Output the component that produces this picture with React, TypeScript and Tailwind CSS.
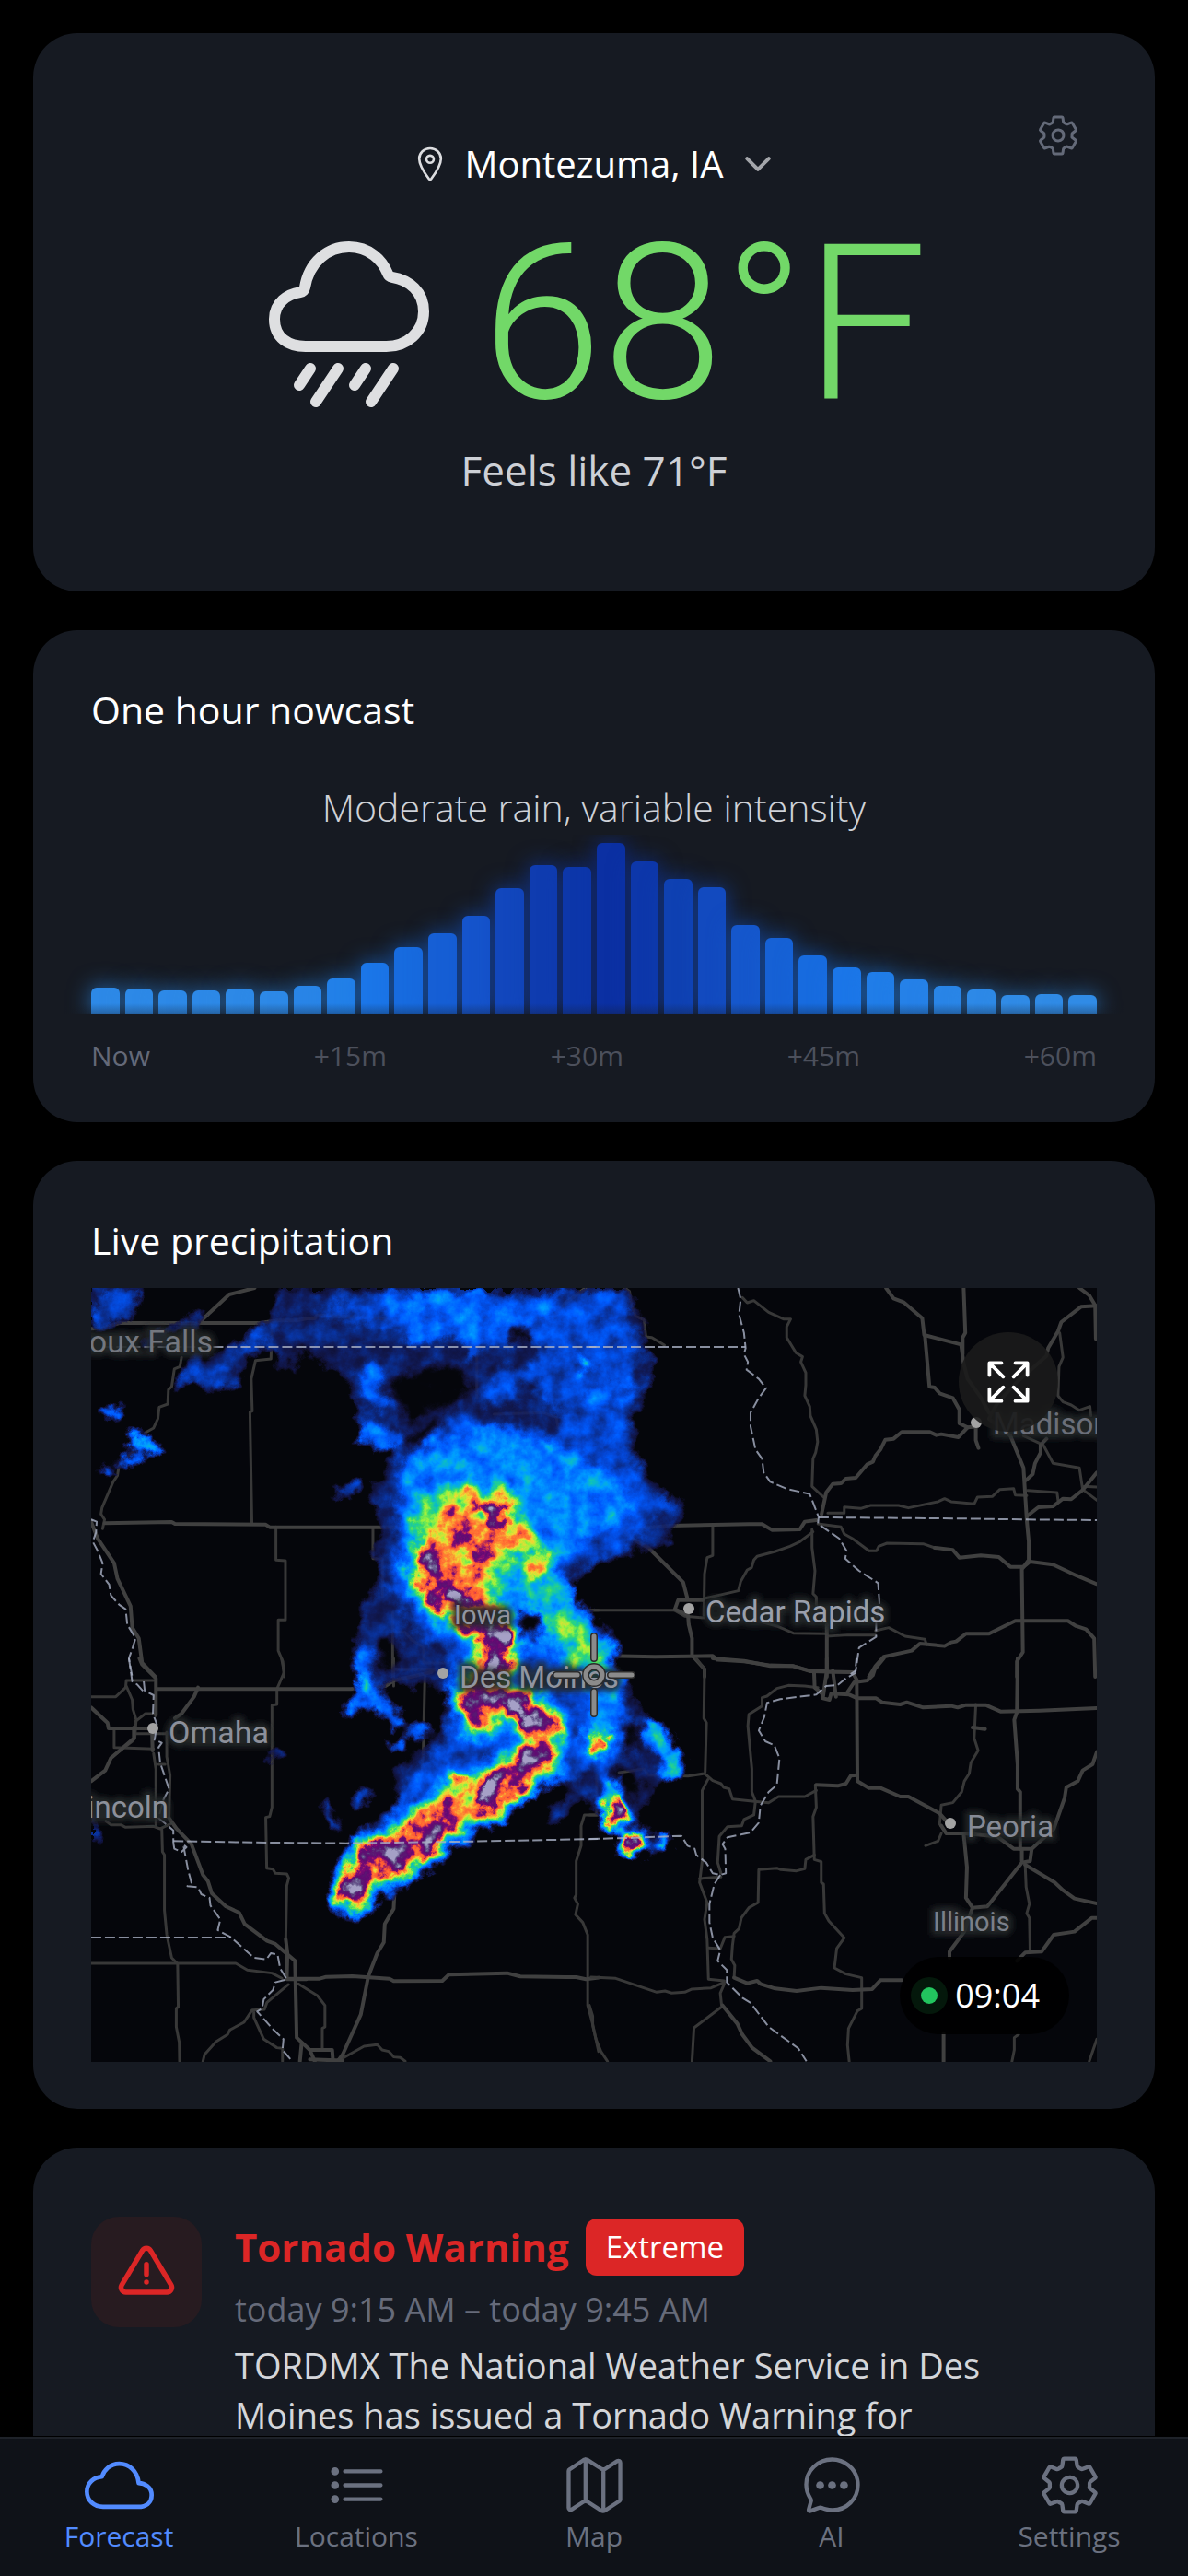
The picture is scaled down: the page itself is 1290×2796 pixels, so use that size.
import type { ReactNode } from 'react';
import {
  IoChatbubbleEllipsesOutline,
  IoChevronDown,
  IoCloudOutline,
  IoExpandOutline,
  IoListOutline,
  IoLocationOutline,
  IoMapOutline,
  IoRainyOutline,
  IoSettingsOutline,
} from 'react-icons/io5';
import { TbAlertTriangle } from 'react-icons/tb';

const bars = [
  { h: 29, c: '#2d89e7' }, { h: 28, c: '#2d89e7' }, { h: 26, c: '#2d89e7' }, { h: 26, c: '#2d89e7' },
  { h: 28, c: '#2d89e7' }, { h: 25, c: '#2d89e7' }, { h: 31, c: '#2985e7' }, { h: 39, c: '#2280e8' },
  { h: 56, c: '#1b76e8' }, { h: 73, c: '#176bdf' }, { h: 88, c: '#165fd5' }, { h: 107, c: '#1554cc' },
  { h: 137, c: '#1247bd' }, { h: 162, c: '#0f3cb0' }, { h: 160, c: '#0d37aa' }, { h: 186, c: '#0b30a3' },
  { h: 166, c: '#0d37aa' }, { h: 147, c: '#0f41b2' }, { h: 138, c: '#124abf' }, { h: 97, c: '#1557cc' },
  { h: 83, c: '#1661d5' }, { h: 64, c: '#176bdf' }, { h: 51, c: '#1b76e8' }, { h: 46, c: '#207de8' },
  { h: 38, c: '#2581e8' }, { h: 31, c: '#2985e7' }, { h: 27, c: '#2d89e7' }, { h: 21, c: '#308be6' },
  { h: 22, c: '#308be6' }, { h: 21, c: '#308be6' },
];

const tabs = [
  { name: 'Forecast', icon: IoCloudOutline },
  { name: 'Locations', icon: IoListOutline },
  { name: 'Map', icon: IoMapOutline },
  { name: 'AI', icon: IoChatbubbleEllipsesOutline },
  { name: 'Settings', icon: IoSettingsOutline },
];

// The base map comes in four quadrants, each with its own local units.
const tiles = [
  {
    transform: 'translate(-9 -18) scale(0.3571 0.3333)',
    thin: [
      'M300,280 295,310 278,318 270,375 260,385 258,432 232,442 228,480 215,510 190,525 150,590 110,632 105,665 92,685 58,770 55,790 66,808 60,838',
      'M575,160 572,285 525,290 512,350 515,455 508,458 514,822',
      'M587,832 587,940 616,942 616,1135 594,1135 594,1235 608,1270 612,1320',
      'M788,54 788,100 780,140',
      'M882,835 882,935 911,936 911,1060',
      'M1198,250 1198,410 M1250,465 1400,460 1440,475 1445,510 1510,555 1510,680',
      'M942,1110 942,1320 M942,1175 980,1175 1000,1200 1036,1225 1036,1275 1110,1275 M942,1296 1080,1296',
      'M1530,1103 1568,1103',
    ],
    thick: [
      'M25,187 60,185 110,168 540,168 590,160 650,160 680,153 705,153 712,143 900,152 960,162 1130,155 1180,140 1250,155 1320,155 1340,147 1430,150 1470,100 1530,54',
      'M355,165 445,75 522,54',
      'M66,820 270,816 280,822 555,824 568,833 990,833',
      'M25,815 45,870 95,950 105,1000 145,1090 150,1160 170,1195 180,1275 220,1320',
    ],
    border: [
      'M60,246 1568,246',
      'M25,808 42,815 40,850 30,880 45,910 60,950 55,985 80,1020 85,1055 110,1085 130,1100 135,1150 160,1195 150,1230 140,1260 150,1320',
    ],
  },
  {
    transform: 'translate(541 -18) scale(0.3571 0.3333)',
    thin: [
      'M108,54 122,65 128,110 140,145 166,158 172,213 190,215 228,240',
      'M465,85 480,102 500,95 545,133 590,155 612,155 600,180 600,215 628,265 648,278 643,295 658,330 658,370 655,405 670,440 672,470 690,515 694,555 688,590 680,610 677,700 712,735',
      'M725,787 775,787 775,767 825,772 855,762 940,762 970,770 1060,750 1080,740 1100,750 1170,757 1180,735 1225,733 1248,710 1290,707 1295,728 1330,730',
      'M695,822 765,832 775,855 800,870 850,910 873,910 880,895 905,885 1015,887 1050,900',
      'M375,825 375,925 358,932 350,985 348,1120',
      'M350,1065 453,1040 460,1010 480,972 493,965 500,940 510,928 565,912 610,895 640,880 680,848',
      'M677,840 677,900 686,975 680,1050 690,1060 690,1090',
      'M258,1103 290,1123 348,1128 M520,1140 570,1155 620,1178 720,1180 M722,1188 785,1184 870,1184 M870,1170 910,1160 960,1188 1020,1198 1025,1215',
      'M1430,200 1440,280 1428,310 1425,405 1440,425 1465,435 1490,452 1522,440 1525,470',
      'M1320,535 1380,565 1410,625 1490,640 1500,710 1543,745 M1333,713 1422,720 1425,745 M1500,700 1543,702',
      'M0,1103 258,1103',
    ],
    thick: [
      'M902,54 925,88 955,100 1012,152 1018,207 1130,238 1138,300 1150,350 1190,410 1215,460',
      'M1138,54 1138,54 1143,200 1135,215 1135,270',
      'M1020,207 1034,375 1050,378 1065,397 1105,412 1125,450 1125,495 1150,508 1180,505 M1175,505 1175,550 1183,575',
      'M1150,508 1122,540 1070,530 1055,533 1035,523 950,523 925,545 900,548 885,580 870,600 862,620 845,628 810,672 780,675 765,690 740,692 720,720 706,790',
      'M1543,112 1495,115 1435,165 1425,195 1395,250 1390,275 1300,360 1240,430 1215,480 1280,535 1320,640 1330,810 1336,880 1336,940 1315,970 1318,1240 1300,1270 1300,1320',
      'M1390,545 1372,565 1372,590 1355,625 1348,660 1328,680 M1333,795 1365,768 1410,765 1440,740 1465,742 1500,712 1543,655',
      'M1490,54 1520,78 1538,110 1540,220',
      'M60,835 140,838 245,828 485,823 525,823 555,842 640,840 655,815 690,810',
      'M100,840 130,870 180,900 285,1012 298,1065 M345,1070 270,1070 260,1100 300,1120 302,1150 312,1195 312,1250 350,1295 350,1320',
      'M1050,900 1105,907 1125,932 1190,925 1245,930 1280,962 1320,962 1340,945 1410,955 1480,990 1543,1018',
      'M60,1252 200,1255 375,1252 390,1265 470,1270 550,1283 620,1285 670,1302 800,1305',
      'M722,1150 722,1320 M850,1320 870,1285 895,1255 980,1235 1005,1212 1080,1220 1100,1208 1115,1205 1145,1180 1215,1180 1295,1138 1455,1138 1480,1155 1510,1165 1535,1195 1538,1320',
    ],
    border: [
      'M0,246 475,246',
      'M452,54 460,90 455,140 470,200 475,250 470,270 482,295 478,320 515,350 537,380 515,412 490,460 490,505 505,580 525,610 530,655 550,685 600,708 670,725 697,800 695,822 760,870 782,910 778,935 820,975 878,1015 882,1080 872,1140 872,1190 820,1225 810,1300 785,1318',
      'M697,801 1140,805 1320,808 1543,810',
    ],
  },
  {
    transform: 'translate(-9 402) scale(0.3571 0.3333)',
    thin: [
      'M25,125 100,125 130,95 132,72 215,72 M132,90 150,135 152,165 162,200 158,260 150,270 90,320',
      'M95,230 95,290 M98,290 215,295 M158,245 255,245',
      'M160,205 190,180 215,180 M604,0 612,45 590,100 590,150 575,152 575,485 568,515 556,518 559,683 578,686 585,700 620,702 626,715 620,740 617,915',
      'M215,310 222,360 222,545 M255,240 255,320 265,380 262,520 M250,345 230,345',
      'M70,530 85,542 115,542 130,550 215,547 235,555 265,540 M240,555 242,630 248,640 248,820 255,900 270,975 288,995 290,1135 284,1140 284,1200 293,1250 294,1312',
      'M25,993 465,993 500,1015 575,1025 605,1042',
      'M625,1062 560,1120 552,1143 515,1145 490,1185 447,1210 440,1225 405,1248 370,1290 365,1312 M520,1145 520,1170 550,1240 590,1268 607,1270 607,1312',
      'M655,1060 713,1098 736,1130 736,1200 728,1205 728,1275',
      'M945,0 945,90 M942,35 1080,35 1040,50 M1040,50 1035,300 1030,370',
      'M1568,510 1525,510 1515,545 1515,610 1500,660 1500,770 1495,780 1505,800 1498,835 1520,860 1535,900 1535,1130 1550,1190 1568,1280',
      'M785,1305 855,1263 895,1258 910,1275 930,1280 945,1298 965,1300 980,1312',
    ],
    thick: [
      'M172,0 180,20 222,65 222,185 M222,100 815,100 920,90 945,72 1060,45',
      'M350,95 338,125 300,180 280,195 M25,160 75,210 78,228 210,228 212,300 M155,225 155,260 85,325 68,365 25,400',
      'M262,520 285,555 330,605 365,705 380,725 392,765 435,808 475,828 492,865 560,920 585,930 645,985 650,1235 690,1275 705,1312',
      'M617,915 622,960 620,1045 680,1045 M620,1043 720,1043 740,1037 820,1035 932,1043 945,1051 1093,1050 1113,1030 1290,1025 1330,1036 1470,1038 1500,1038 1530,1045 1568,1040',
      'M947,770 945,815 918,865 915,925 895,960 868,1035 845,1160 790,1290 775,1312',
      'M665,1255 660,1312 M690,1275 758,1275 760,1305 M690,1306 790,1310',
    ],
    border: [
      'M140,0 150,75 165,85 190,115 M185,75 188,105 215,120 213,180 225,215 218,265 240,275 230,290 235,340 262,425 245,460 230,520 275,560 275,600',
      'M275,595 560,600 800,602 1140,597 1568,588',
      'M275,600 278,620 300,630 315,615 305,605 320,690 330,730 318,742 350,745 360,768 385,780 388,805 418,850 410,885 450,908 520,975 558,980 572,960 592,965 600,1010 620,1045 585,1055 578,1080 550,1110 545,1140 530,1150 580,1210 610,1240 607,1275 635,1310',
      'M25,909 450,909',
    ],
  },
  {
    transform: 'translate(541 402) scale(0.3571 0.3333)',
    thin: [
      'M325,0 350,35 348,195 356,210 352,370 M360,395 343,430 343,660 335,730 358,795 350,850 358,915 362,1045 410,1050',
      'M695,95 655,90 605,88 570,98 540,123 525,128 525,155 485,182 482,220 494,360 494,435 505,465 500,510 470,525 463,545 420,548 395,580 390,665 400,700',
      'M90,372 165,360 180,380 300,383 350,375 375,398 400,408 408,420 425,425 435,458 495,465 545,470 575,450 655,450 690,430',
      'M687,412 690,485 680,515 684,655 705,662 705,730 712,735 715,830 728,855 775,910 752,945 745,1008 780,1028 828,1040 828,1140 815,1148 788,1205 785,1260 790,1312',
      'M684,640 658,655 655,685 630,692 582,688 570,683 515,688 513,795 485,812 462,845 455,880 440,895 435,935 432,980 442,1000 440,1040',
      'M335,717 400,712 M362,943 398,945 412,908 440,905',
      'M1175,150 1170,260 1182,300 1160,340 1155,375 1140,400 1132,435 1105,470 1070,478 1065,540 1085,570 M1070,570 1060,595 1022,610',
      'M1325,670 1328,745 1338,800 1330,830 1338,845 1340,955',
      'M22,380 22,510 0,510 M5,1038 80,1042 205,1087 230,1083 250,1090 290,1087 312,1077 370,1073 410,1055',
      'M410,1060 398,1090 402,1130 M402,1135 318,1203 312,1312 M0,1130 10,1165 10,1195 20,1240 35,1280 55,1312',
      'M1543,1240 1520,1312 M1305,1225 1292,1235 1292,1275 1285,1312',
    ],
    thick: [
      'M375,0 470,8 550,25 620,25 670,40 800,45 M722,0 722,40 710,130 730,135 735,115 790,118 815,130 872,130 890,143 945,150 965,143 1015,160 1100,155 1120,160 1145,152 1205,152 1250,173 1370,170 1543,162',
      'M683,40 685,95 708,115 M740,40 750,125 M895,0 868,35 862,55 845,72 805,78 785,110 M800,45 813,70 815,400 850,422 885,422 945,450 970,450 1065,505 1090,535',
      'M815,380 795,382 780,408 755,415 690,412',
      'M1302,0 1300,175 1292,200 1302,345 1302,425 1310,435 1310,620 M1543,305 1530,345 1500,365 1485,400 1450,420 1445,455 1412,555 1345,620 1340,660 1315,665 1210,808 1165,812 1145,780 1148,680 1138,570 1085,570 1070,545',
      'M1165,225 1203,230 M1140,570 1240,580 1290,620 1345,620 M1315,620 1315,660 M1325,672 1415,730 1440,755 1475,782 1543,798',
      'M1543,845 1528,845 1475,890 1412,900 1375,955 1325,958 1300,985 M1165,812 1140,890 1095,955 1095,975',
      'M440,1040 480,1058 510,1050 520,1060 565,1075 630,1083 705,1073 800,1080 860,1077 885,1048 950,1048 M405,1130 450,1190 465,1225 495,1268 550,1312',
      'M1077,1220 1077,1312',
    ],
    border: [
      'M0,588 120,585 280,578 298,610 320,620 325,640 355,665 375,700 398,705 415,700 413,620 405,605 420,583 490,567 515,535 520,480 545,435 570,412 578,325 562,283 535,270 515,235 532,190 540,145 580,133 690,118 720,90 755,87 780,65 808,48 812,0',
      'M398,705 380,735 365,800 365,860 375,910 398,950 390,985 418,1015 418,1055 465,1105 490,1122 545,1200 635,1270 660,1312',
    ],
  },
];

// Rain rate as grey levels; the radar filter turns them into the colour scale.
const radar = {
  faint:
    'M190,30 200,0 582,0 600,30 604,60 615,82 608,110 590,140 597,185 612,205 628,225 648,232 645,248 630,262 626,280 585,290 545,304 522,320 540,350 568,372 572,400 588,435 602,462 628,482 642,505 646,528 612,537 606,560 590,575 604,588 632,596 630,610 590,616 572,600 556,570 530,555 512,580 490,590 496,562 526,540 480,545 440,580 380,620 330,655 272,688 264,678 270,612 290,590 305,575 330,560 326,520 360,500 378,480 385,440 330,430 300,460 284,466 296,430 282,400 288,350 305,325 310,270 302,220 322,192 328,178 290,165 282,120 270,80 225,70 218,98 200,80 185,60 160,110 125,115 92,100 100,80 160,60Z',
  holes: [
    'M332,92 400,85 415,110 390,128 345,145 326,120Z',
    'M470,352 492,345 488,370 468,385 458,370Z',
    'M455,48 478,45 475,62 460,62Z',
    'M577,470 600,478 598,500 582,505Z',
    'M565,520 600,530 600,555 580,550Z',
    'M312,385 328,375 335,405 318,415Z',
    'M345,160 378,140 370,160 342,178Z',
  ],
  blue:
    'M245,20 330,2 580,4 592,60 600,90 580,130 585,170 600,210 640,240 612,250 590,280 550,295 520,300 515,330 545,370 570,400 578,440 590,470 575,510 560,540 580,600 555,560 545,520 500,540 420,590 340,640 280,675 270,620 320,580 340,540 390,480 395,430 390,400 350,370 322,320 330,260 332,190 380,150 425,120 440,90 425,50 330,48 250,30Z',
  bright:
    'M340,190 380,165 440,150 520,175 560,200 590,235 560,265 525,280 500,300 520,350 556,380 572,420 576,455 560,490 545,470 530,420 500,400 470,360 430,370 400,390 370,370 345,320 338,260Z',
  green:
    'M350,250 360,222 402,210 454,212 468,245 500,290 508,315 475,312 452,302 447,335 420,352 372,355 350,330Z M490,350 530,360 545,390 555,410 540,430 510,400Z',
  yellow:
    'M360,262 370,242 400,218 450,218 460,242 490,290 498,305 480,318 455,285 440,295 440,345 400,350 366,342 355,310Z',
  orange:
    'M366,262 385,245 415,228 440,226 458,245 452,262 472,278 490,300 482,312 462,290 440,280 432,292 436,330 428,350 395,345 368,325 362,295Z',
  // south-west end of the line
  foot: 'M277,660 285,664 294,650 310,635 330,631 368,606 376,588 364,590 340,592 332,602 298,614 288,635Z',
};

const spine = 'M366,300 378,330 400,345 430,368 444,385 436,410 418,440 424,462 M430,440 462,450 488,476 484,512 446,538 430,556';
const tail = 'M440,546 400,560 366,586';

const places = [
  { name: 'Sioux Falls', x: 132, y: 70, anchor: 'end', size: 34, fill: '#73777f' },
  { name: 'Madison', x: 979, y: 159, anchor: 'start', size: 33, fill: '#6b6f79' },
  { name: 'Cedar Rapids', x: 667, y: 363, anchor: 'start', size: 33, fill: '#9a9fab' },
  { name: 'Iowa', x: 394, y: 365, anchor: 'start', size: 29, fill: '#9095a0' },
  { name: 'Des Moines', x: 400, y: 434, anchor: 'start', size: 33, fill: '#9095a0' },
  { name: 'Omaha', x: 84, y: 494, anchor: 'start', size: 34, fill: '#8c909a' },
  { name: 'Lincoln', x: 84, y: 575, anchor: 'end', size: 33, fill: '#8c909a' },
  { name: 'Peoria', x: 951, y: 596, anchor: 'start', size: 33, fill: '#868a95' },
  { name: 'Illinois', x: 914, y: 698, anchor: 'start', size: 29, fill: '#7b8089' },
] as const;

const dots = [[649, 348], [961, 146], [382, 418], [67, 478], [933, 581]];

function Card({ children, className = '' }: { children: ReactNode; className?: string }) {
  return <section className={`relative rounded-[48px] bg-[#161a22] px-[63px] ${className}`}>{children}</section>;
}

function RadarMap() {
  return (
    <svg viewBox="0 0 1092 840" className="block w-full bg-[#05060b]" role="img" aria-label="Precipitation radar">
      <defs>
        <filter id="radar" x="0" y="0" width="1092" height="840" filterUnits="userSpaceOnUse" colorInterpolationFilters="sRGB">
          <feGaussianBlur in="SourceGraphic" stdDeviation="4" result="soft" />
          <feTurbulence type="fractalNoise" baseFrequency="0.05" numOctaves="5" seed="7" result="noise" />
          <feColorMatrix in="noise" values="0 0 0 1 0  0 0 0 1 0  0 0 0 1 0  0 0 0 0 1" result="grain" />
          <feDisplacementMap in="soft" in2="noise" scale="24" xChannelSelector="R" yChannelSelector="G" result="rough" />
          <feComposite in="rough" in2="grain" operator="arithmetic" k1="0.7" k2="0.64" k3="0" k4="0" />
          <feColorMatrix values="1 0 0 0 0  1 0 0 0 0  1 0 0 0 0  1 0 0 0 0" result="level" />
          <feComponentTransfer>
            <feFuncR type="table" tableValues="0.08 0.08 0.08 0.08 0.07 0.04 0.02 0 0 0 0.05 0.2 0.6 0.95 1 1 0.5 0.38 0.35 0.4 0.65" />
            <feFuncG type="table" tableValues="0.08 0.08 0.08 0.08 0.12 0.2 0.28 0.36 0.48 0.62 0.75 0.85 0.95 0.85 0.5 0.35 0.04 0.04 0.1 0.35 0.63" />
            <feFuncB type="table" tableValues="0.25 0.25 0.25 0.28 0.4 0.62 0.85 1 1 1 0.75 0.45 0.25 0.2 0.2 0.2 0.46 0.45 0.45 0.55 0.78" />
            <feFuncA type="table" tableValues="0 0 0 0.7 0.86 0.92 0.96 1 1 1 1 1 1 1 1 1 1 1 1 1 1" />
          </feComponentTransfer>
        </filter>
        <filter id="halo" x="-20%" y="-40%" width="140%" height="180%">
          <feGaussianBlur stdDeviation="3" />
        </filter>
      </defs>

      {tiles.map((tile) => (
        <g key={tile.transform} transform={tile.transform} fill="none" stroke="#404040" strokeLinejoin="round" strokeLinecap="round">
          {tile.thin.map((d) => (
            <path key={d} d={d} strokeWidth="3" vectorEffect="non-scaling-stroke" stroke="#383838" />
          ))}
          {tile.thick.map((d) => (
            <path key={d} d={d} strokeWidth="4" vectorEffect="non-scaling-stroke" />
          ))}
        </g>
      ))}

      <g filter="url(#radar)" fill="none" strokeLinejoin="round" strokeLinecap="round">
        <rect width="1092" height="840" fill="#000" />
        <path d={radar.faint} fill="#383838" />
        <path d={radar.blue} fill="#4e4e4e" />
        <path d={radar.bright} fill="#6a6a6a" />
        <path d="M330,18 420,10 M350,50 500,20 M415,30V70 M300,75 310,125 M300,155 325,165 M545,120 580,110" stroke="#606060" strokeWidth="22" />
        <path d="M250,76 330,72 M420,78 470,75 M470,110 500,150 M420,135 470,140" stroke="#343434" strokeWidth="22" />
        {radar.holes.map((d) => (
          <path key={d} d={d} fill="#181818" />
        ))}
        {/* scattered showers */}
        <path d="M0,0H58L50,30 20,45 0,40Z" fill="#484848" />
        <path d="M170,60 195,45 M100,100 150,95" stroke="#484848" strokeWidth="22" />
        <path d="M60,60 85,48 120,28" stroke="#404040" strokeWidth="14" />
        <path d="M14,136 30,132 M36,190 50,180 M14,198 20,198" stroke="#686868" strokeWidth="12" />
        <path d="M46,164 72,174" stroke="#808080" strokeWidth="16" />
        <path d="M46,162H49" stroke="#b0b0b0" strokeWidth="10" />
        <path d="M268,222 285,218 M196,508 204,505 M256,565 266,585 M288,558 302,550 M2,585V592" stroke="#484848" strokeWidth="15" />
        <path d="M298,400V440L282,460 M298,440 318,455 332,466 M350,480H360 M332,496H336" stroke="#606060" strokeWidth="18" />
        <path d="M298,424V436 M285,454V456" stroke="#888" strokeWidth="9" />
        <path d="M612,480 630,510 632,525" stroke="#787878" strokeWidth="24" />
        <path d="M480,305 505,345 545,395" stroke="#7c7c7c" strokeWidth="42" />
        {/* main line */}
        <path d={radar.green} fill="#8c8c8c" />
        <path d={spine} stroke="#747474" strokeWidth="60" />
        <path d={tail} stroke="#6c6c6c" strokeWidth="66" />
        <path d={radar.foot} fill="#6c6c6c" stroke="#6c6c6c" strokeWidth="44" />
        <path d={spine} stroke="#8e8e8e" strokeWidth="46" />
        <path d={tail} stroke="#909090" strokeWidth="52" />
        <path d={radar.foot} fill="#909090" stroke="#909090" strokeWidth="30" />
        <path d={radar.yellow} fill="#9c9c9c" />
        <path d={radar.orange} fill="#b4b4b4" />
        <path d={spine} stroke="#b4b4b4" strokeWidth="36" />
        <path d={tail} stroke="#b4b4b4" strokeWidth="40" />
        <path d={radar.foot} fill="#b6b6b6" stroke="#b6b6b6" strokeWidth="21" />
        <path d="M425,240 445,258 M404,272 420,290 M365,296 380,325 M385,570 366,590" stroke="#d4d4d4" strokeWidth="17" />
        <path d={spine} stroke="#d8d8d8" strokeWidth="21" />
        <path d={radar.foot} fill="#dcdcdc" stroke="#dcdcdc" strokeWidth="10" />
        <path d="M436,242 442,250 M396,332 412,345 M446,380 440,404 M462,454 472,460 M438,538 430,555" stroke="#fff" strokeWidth="16" />
        {/* isolated cells */}
        <path d="M534,84H536" stroke="#a8a8a8" strokeWidth="10" />
        <path d="M550,493H551 M568,568 567,574 M584,602H588" stroke="#888" strokeWidth="32" />
        <path d="M624,604H625 M565,540V550" stroke="#8c8c8c" strokeWidth="15" />
        <path d="M550,493H551 M568,568 567,574 M584,602H588" stroke="#e0e0e0" strokeWidth="18" />
      </g>

      {tiles.map((tile) => (
        <g key={tile.transform} transform={tile.transform} fill="none" stroke="#a9b0c4" strokeOpacity="0.8" strokeLinejoin="round">
          {tile.border.map((d) => (
            <path key={d} d={d} strokeWidth="2" strokeDasharray="11 4" vectorEffect="non-scaling-stroke" />
          ))}
        </g>
      ))}

      <g className="[font-family:Roboto,sans-serif]">
        {places.map((p) => (
          <g key={p.name} fontSize={p.size} textAnchor={p.anchor}>
            <text x={p.x} y={p.y} aria-hidden="true" fill="none" stroke="#25282a" strokeOpacity="0.9" strokeWidth="9" filter="url(#halo)">
              {p.name}
            </text>
            <text x={p.x} y={p.y} fill={p.fill}>{p.name}</text>
          </g>
        ))}
      </g>
      {dots.map(([x, y]) => (
        <circle key={x} cx={x} cy={y} r="6" fill="#a3a3a3" />
      ))}

      <g fill="none" strokeLinecap="round">
        <path d="M546,378V402 M546,438V462 M505,420H528 M564,420H587" stroke="#2b2b2b" strokeWidth="8" />
        <circle cx="546" cy="420" r="9" stroke="#2b2b2b" strokeWidth="8" />
        <path d="M546,378V402 M546,438V462 M505,420H528 M564,420H587" stroke="#8b8b8b" strokeWidth="5" />
        <circle cx="546" cy="420" r="9" stroke="#8b8b8b" strokeWidth="5" />
      </g>
    </svg>
  );
}

export default function App() {
  return (
    <div className="flex h-dvh flex-col overflow-hidden bg-black text-white [font-family:'Open_Sans',sans-serif]">
      <main className="flex min-h-0 flex-1 flex-col gap-[42px] overflow-y-auto px-9 pt-9 [scrollbar-width:none] *:shrink-0">
        <Card className="flex flex-col items-center pt-28 pb-[102px]">
          <button aria-label="Forecast settings" className="absolute top-[87px] right-[81px] text-[#646a79]">
            <IoSettingsOutline className="size-12" />
          </button>
          <button className="flex items-center gap-4 text-[40px] leading-[60px]">
            <IoLocationOutline className="size-[42px] text-[#dcdde0]" />
            Montezuma, IA
            <IoChevronDown className="size-[42px] text-[#a3a5aa]" />
          </button>
          <div className="mt-4 flex items-center gap-12">
            <IoRainyOutline className="size-48 text-[#dedfe1]" />
            <h1 className="text-[236px] leading-[256px] font-light text-[#72d868] [font-family:Roboto,sans-serif]">68°F</h1>
          </div>
          <p className="text-[44px] leading-[60px] text-[#cdd0d6]">Feels like 71°F</p>
        </Card>

        <Card className="pt-[57px] pb-[51px]">
          <h2 className="text-[41px] leading-[58px]">One hour nowcast</h2>
          <p className="mt-[47px] text-center text-[41px] leading-[60px] font-light text-[#cfd2d8]">Moderate rain, variable intensity</p>
          <div className="relative -mx-9 flex h-[195px] items-end gap-[6px] overflow-hidden px-9">
            {bars.map((bar, i) => (
              <div
                key={i}
                className="flex-1 rounded-t-md"
                style={{ height: bar.h, backgroundColor: bar.c, boxShadow: `0 0 24px ${bar.c}bb` }}
              />
            ))}
            <div className="absolute inset-x-0 bottom-0 h-3 bg-linear-to-b from-transparent to-[#161a22]/35" />
          </div>
          <div className="mt-6 flex justify-between text-[30px] leading-[42px] text-[#4c505c]">
            <span className="text-[#646978]">Now</span>
            <span>+15m</span>
            <span>+30m</span>
            <span>+45m</span>
            <span>+60m</span>
          </div>
        </Card>

        <Card className="pt-[57px] pb-[51px]">
          <h2 className="text-[41px] leading-[58px]">Live precipitation</h2>
          <div className="relative mt-[23px]">
            <RadarMap />
            <button
              aria-label="Expand map"
              className="absolute top-12 right-[42px] flex size-27 items-center justify-center rounded-full bg-[#1b1b1b]/90"
            >
              <IoExpandOutline className="size-[60px]" />
            </button>
            <div className="absolute right-[30px] bottom-[30px] flex h-21 items-center gap-2 rounded-full bg-black/90 pr-8 pl-3 text-4xl">
              <span className="flex size-10 items-center justify-center rounded-full bg-[#22c55e]/12">
                <span className="size-[18px] rounded-full bg-[#22c55e]" />
              </span>
              09:04
            </div>
          </div>
        </Card>

        <Card className="flex gap-9 pt-[75px] pb-24">
          <div className="flex size-30 shrink-0 items-center justify-center rounded-[30px] bg-[#271b20]">
            <TbAlertTriangle className="size-[66px] text-[#dc2626]" />
          </div>
          <div>
            <div className="flex items-center gap-[18px]">
              <h2 className="text-[42px] leading-[66px] font-bold text-[#dc2626]">Tornado Warning</h2>
              <span className="rounded-xl bg-[#dc2626] px-[22px] text-[33px] leading-[62px]">Extreme</span>
            </div>
            <p className="pt-0.5 text-4xl leading-[66px] text-[#666b7a]">today 9:15 AM – today 9:45 AM</p>
            <p className="text-[38px] leading-[54px] text-[#d4d6da]">
              TORDMX The National Weather Service in Des Moines has issued a Tornado Warning for
            </p>
          </div>
        </Card>
      </main>

      <nav className="mt-px grid h-[151px] shrink-0 grid-cols-5 border-t-2 border-[#1e2229] bg-[#0f1218]">
        {tabs.map(({ name, icon: Icon }, i) => (
          <a
            key={name}
            href={`#${name.toLowerCase()}`}
            aria-current={i === 0 ? 'page' : undefined}
            className={`flex flex-col items-center pt-4 text-[30px] leading-[42px] ${i === 0 ? 'text-[#528bff]' : 'text-[#6b7180]'}`}
          >
            <Icon className={i === 0 ? 'size-[75px] -my-[3px]' : 'size-[69px]'} />
            {name}
          </a>
        ))}
      </nav>
    </div>
  );
}
